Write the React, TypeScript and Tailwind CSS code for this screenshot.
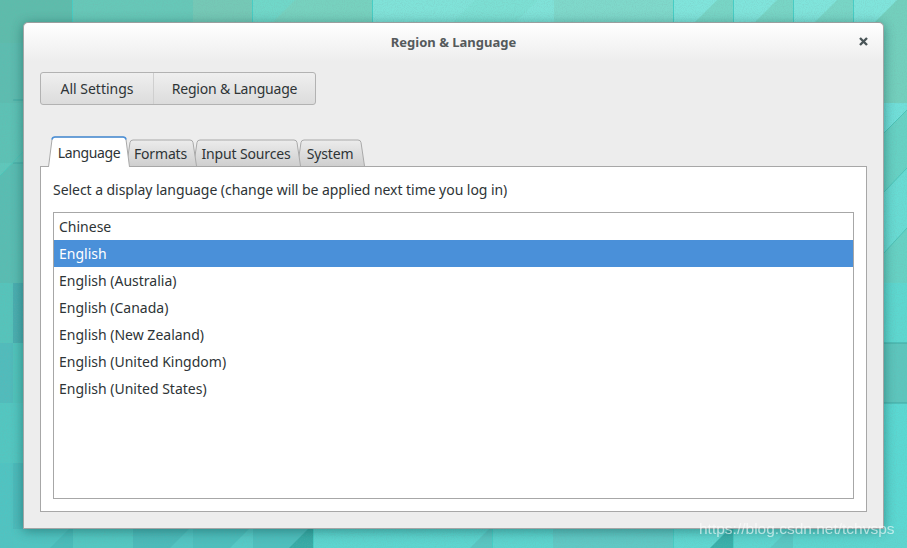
const tabs = [
  { label: 'Language', width: 82, box: 'h-[31px] w-[82px] -mb-px z-30', active: true },
  { label: 'Formats', width: 71, box: 'h-[27px] w-[71px] -ml-[4px] z-20', active: false },
  { label: 'Input Sources', width: 108, box: 'h-[27px] w-[108px] -ml-[4px] z-10', active: false },
  { label: 'System', width: 68, box: 'h-[27px] w-[68px] -ml-[4px] z-0', active: false },
];

const languages = [
  'Chinese',
  'English',
  'English (Australia)',
  'English (Canada)',
  'English (New Zealand)',
  'English (United Kingdom)',
  'English (United States)',
];

// patches of the wallpaper that stick out round the window: x, y, w, h, colour
const patches: [number, number, number, number, string][] = [
  // top strip
  [0, 0, 72, 43, '#5dbcab'],
  [72, 0, 121, 43, '#66c8b8'],
  [193, 0, 60, 43, '#75c9b6'],
  [253, 0, 120, 43, '#77d2bf'],
  [373, 0, 181, 43, '#7ce0d4'],
  [554, 0, 119, 43, '#7fd9cb'],
  [673, 0, 180, 43, '#78d6c6'],
  [853, 0, 54, 103, '#73d0bd'],
  // left strip
  [0, 43, 23, 60, '#5cbdb0'],
  [0, 103, 23, 60, '#5cc2b5'],
  [0, 163, 23, 120, '#58bdb2'],
  [0, 283, 13, 60, '#55c4bb'],
  [13, 283, 10, 60, '#49aeb0'],
  [0, 343, 13, 60, '#50bcbc'],
  [13, 343, 10, 60, '#50c4bc'],
  [0, 403, 23, 60, '#52c7c1'],
  [0, 463, 13, 85, '#4fc4c2'],
  [13, 463, 10, 85, '#4bbcbc'],
  // right strip
  [884, 103, 23, 180, '#66d2c4'],
  [884, 283, 23, 60, '#5dd8d0'],
  [884, 343, 23, 60, '#5cc6bd'],
  [884, 403, 23, 145, '#5ad9d3'],
  // bottom strip
  [13, 529, 60, 19, '#4fc5c2'],
  [73, 529, 60, 19, '#52c8c2'],
  [133, 529, 60, 19, '#4abbba'],
  [193, 529, 60, 19, '#4cbfbd'],
  [253, 529, 60, 19, '#4dc0be'],
  [313, 529, 180, 19, '#5cd6d0'],
  [493, 529, 60, 19, '#5bd5cf'],
  [553, 529, 120, 19, '#5fc9c5'],
  [673, 529, 60, 19, '#5fd8d2'],
  [733, 529, 174, 19, '#5cd6d0'],
];

// lighter or darker triangles of the folded pattern
const folds: [string, string][] = [
  ['M253 0H295L252 43Z', '#70d8c9'],
  ['M373 0H475L432 43H373Z', '#80e3d9'],
  ['M538 0H554V43H495Z', '#80e3d9'],
  ['M673 0H717L674 43H673Z', '#80e5dc'],
  ['M733 0H777L734 43H733Z', '#80e5dc'],
  ['M793 0H837L794 43H793Z', '#80e5dc'],
  ['M853 0H897L854 43H853Z', '#80e5dc'],
  ['M884 103H907V110L884 133Z', '#70e0da'],
  ['M884 192L907 168V228L884 253Z', '#68dcd4'],
  ['M0 163H13L0 176Z', '#5ec8bb'],
  ['M289 548L313 524V548Z', '#36aba6'],
  ['M470 548L493 525V548Z', '#58c6c2'],
  ['M710 548L733 525V548Z', '#38b0aa'],
  ['M770 548L793 525V548Z', '#58c8c4'],
  ['M50 548L73 525V548Z', '#48bcba'],
  ['M170 548L193 525V548Z', '#52c6c4'],
  ['M230 548L253 525V548Z', '#56cbc8'],
];

function Wallpaper() {
  return (
    <svg className="absolute inset-0" width="907" height="548" viewBox="0 0 907 548">
      <defs>
        <filter id="grain">
          <feTurbulence type="fractalNoise" baseFrequency="0.9" numOctaves="2" seed="4" />
          <feColorMatrix values="0 0 0 0 0.2  0 0 0 0 0.4  0 0 0 0 0.4  0 0 0 1.4 -0.55" />
        </filter>
      </defs>
      <rect width="907" height="548" fill="#5ccfc4" />
      {patches.map(([x, y, w, h, c]) => (
        <rect key={`${x}-${y}`} x={x} y={y} width={w} height={h} fill={c} />
      ))}
      {folds.map(([d, c]) => (
        <path key={d} d={d} fill={c} />
      ))}
      <path
        d="M72.5 0V23M252.5 0V23M372.5 0V23M673.5 0V23M733.5 0V23M793.5 0V23M853.5 0V23M492.5 529V548M673.5 529V548M733.5 529V548M313.5 529V548"
        stroke="#45cfc6"
        fill="none"
      />
      <path d="M13 100H23M13 163H23M884 343H907M884 403H907" stroke="#3fa9a2" fill="none" />
      <path d="M0 176L23 152M884 133L907 110M884 192L907 168M884 253L907 228" stroke="#4bc4b8" fill="none" />
      <rect width="907" height="548" filter="url(#grain)" opacity="0.35" />
    </svg>
  );
}

function TabShape({ width, active }: { width: number; active: boolean }) {
  const h = active ? 31 : 27;
  const edge = `M0.5 ${h} L4 3.5 Q4.4 1 7 1 L${width - 7} 1 Q${width - 4.4} 1 ${width - 4} 3.5 L${width - 0.5} ${h}`;
  const top = `M4 3.5 Q4.4 1 7 1 L${width - 7} 1 Q${width - 4.4} 1 ${width - 4} 3.5`;
  return (
    <svg className="absolute inset-0" width={width} height={h}>
      <defs>
        <linearGradient id="tabOff" x1="0" y1="0" x2="0" y2="1">
          <stop offset="0" stopColor="#ececec" />
          <stop offset="1" stopColor="#cfcfcf" />
        </linearGradient>
      </defs>
      <path d={edge} fill={active ? '#ffffff' : 'url(#tabOff)'} stroke="#a9a9a9" />
      {active && <path d={top} fill="none" stroke="#4a90d9" strokeWidth="1.6" />}
    </svg>
  );
}

function App() {
  return (
    <div className="relative w-[907px] h-[548px] overflow-hidden font-['Noto_Sans',sans-serif] text-[14px] text-[#2e3436]">
      <Wallpaper />
      <div className="absolute left-[23px] top-[22px] w-[861px] h-[507px] flex flex-col rounded-t-[5px] border border-[#a3a6a6] border-t-[#9b9e9e] bg-[#ededed] shadow-[0_2px_12px_rgba(0,60,60,0.45)]">
        <div className="relative h-[39px] shrink-0 flex items-center justify-center rounded-t-[5px] bg-gradient-to-b from-white to-[#ededed] font-bold text-[13px] text-[#555a5c]">
          Region &amp; Language
          <svg className="absolute right-[15px] top-[14px]" width="9" height="9" viewBox="0 0 9 9">
            <path d="M1 1 L8 8 M8 1 L1 8" stroke="#4a5558" strokeWidth="2.4" />
          </svg>
        </div>
        <div className="flex-1 flex flex-col px-[16px] pt-[10px] pb-[16px]">
          <div className="flex self-start h-[33px] rounded-[3px] border border-[#b2b2b2] bg-gradient-to-b from-[#efefef] to-[#dcdcdc]">
            <div className="w-[113px] flex items-center justify-center border-r border-[#cfcfcf]">All Settings</div>
            <div className="w-[161px] flex items-center justify-center tracking-[-0.2px]">Region &amp; Language</div>
          </div>
          <div className="relative z-10 flex items-end pl-[8px] mt-[31px] h-[30px]">
            {tabs.map((tab) => (
              <div key={tab.label} className={`relative flex items-center justify-center ${tab.box}`}>
                <TabShape width={tab.width} active={tab.active} />
                <span className={tab.active ? 'relative mt-[2px] tracking-[-0.4px]' : 'relative mt-[1px] -ml-[2px] tracking-[-0.15px]'}>{tab.label}</span>
              </div>
            ))}
          </div>
          <div className="flex-1 flex flex-col border border-[#a7a7a7] bg-white px-[12px] pb-[12px]">
            <p className="mt-[13px] mb-[12px] h-[20px] leading-[20px] tracking-[-0.05px]">
              Select a display language (change will be applied next time you log in)
            </p>
            <ul className="flex-1 border border-[#a7a7a7]">
              {languages.map((lang) => (
                <li
                  key={lang}
                  className={
                    lang === 'English'
                      ? 'h-[27px] px-[5px] leading-[27px] bg-[#4a90d9] text-white'
                      : 'h-[27px] px-[5px] leading-[27px]'
                  }
                >
                  {lang}
                </li>
              ))}
            </ul>
          </div>
        </div>
      </div>
      <span className="absolute left-[699px] top-[517px] blur-[0.4px] font-['Liberation_Sans',sans-serif] text-[15.5px] text-white/60">
        https://blog.csdn.net/tchvsps
      </span>
    </div>
  );
}

export default App;
